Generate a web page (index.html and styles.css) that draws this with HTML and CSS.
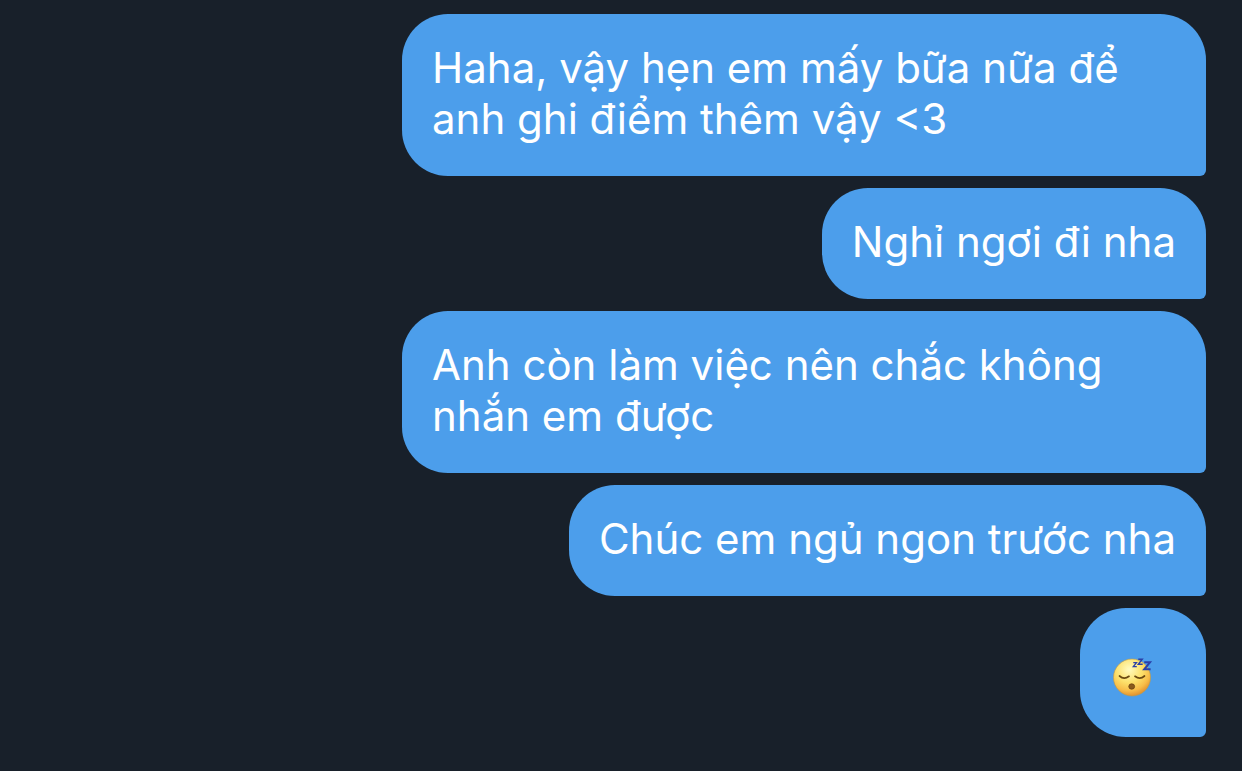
FILE: index.html
```html
<!DOCTYPE html>
<html lang="vi">
<head>
    <meta charset="UTF-8">
    <meta name="viewport" content="width=device-width, initial-scale=1.0">
    <title>Tin nhắn</title>
    <link rel="stylesheet" href="styles.css">
</head>
<body>
    <main class="chat">
        <p class="message">Haha, vậy hẹn em mấy bữa nữa để anh ghi điểm thêm vậy &lt;3</p>
        <p class="message">Nghỉ ngơi đi nha</p>
        <p class="message">Anh còn làm việc nên chắc không nhắn em được</p>
        <p class="message">Chúc em ngủ ngon trước nha</p>
        <div class="message message-emoji">
            <svg class="emoji" viewBox="0 0 42 42" role="img" aria-label="Mặt ngủ">
                <defs>
                    <radialGradient id="face" cx="42%" cy="28%" r="72%">
                        <stop offset="0" stop-color="#fffbc0"/>
                        <stop offset="0.5" stop-color="#fce06a"/>
                        <stop offset="0.8" stop-color="#f7bc48"/>
                        <stop offset="1" stop-color="#e2922f"/>
                    </radialGradient>
                </defs>
                <circle cx="20" cy="21.5" r="18.5" fill="url(#face)" stroke="#c79a3c" stroke-width="0.6"/>
                <path d="M7.5 20q4.5 4 9.5 0.3M23 20.3q5 3.7 9.5-0.3" fill="none" stroke="#6b4a12" stroke-width="1.7" stroke-linecap="round"/>
                <ellipse cx="19.7" cy="30.5" rx="2.9" ry="2.7" fill="#8a5a1c" stroke="#6b4212" stroke-width="0.8"/>
                <g fill="none" stroke="#2a3fa8" stroke-linejoin="miter">
                    <path d="M21.3 6.6h3.2l-3.2 4h3.5" stroke-width="1.3"/>
                    <path d="M26.3 3.2h4l-4 5h4.4" stroke-width="1.4"/>
                    <path d="M32.2 6.3h5.8l-5.8 7h6.4" stroke-width="2"/>
                </g>
            </svg>
        </div>
    </main>
</body>
</html>
```

FILE: styles.css
```css
body {
    font-family: Inter, "Noto Sans", sans-serif;
    background-color: #18202a;
    margin: 0;
}
.chat {
    display: flex;
    flex-direction: column;
    align-items: flex-end;
    gap: 12px;
    padding: 14px 36px 34px;
}
.message {
    box-sizing: border-box;
    max-width: 804px;
    margin: 0;
    padding: 28px 30px 32px;
    border-radius: 46px 46px 6px 46px;
    background-color: #4c9eeb;
    color: #ffffff;
    font-size: 42px;
    line-height: 51px;
}
.message-emoji {
    padding: 48px 52px 39px 32px;
}
.emoji {
    display: block;
    width: 42px;
    height: 42px;
}
```
